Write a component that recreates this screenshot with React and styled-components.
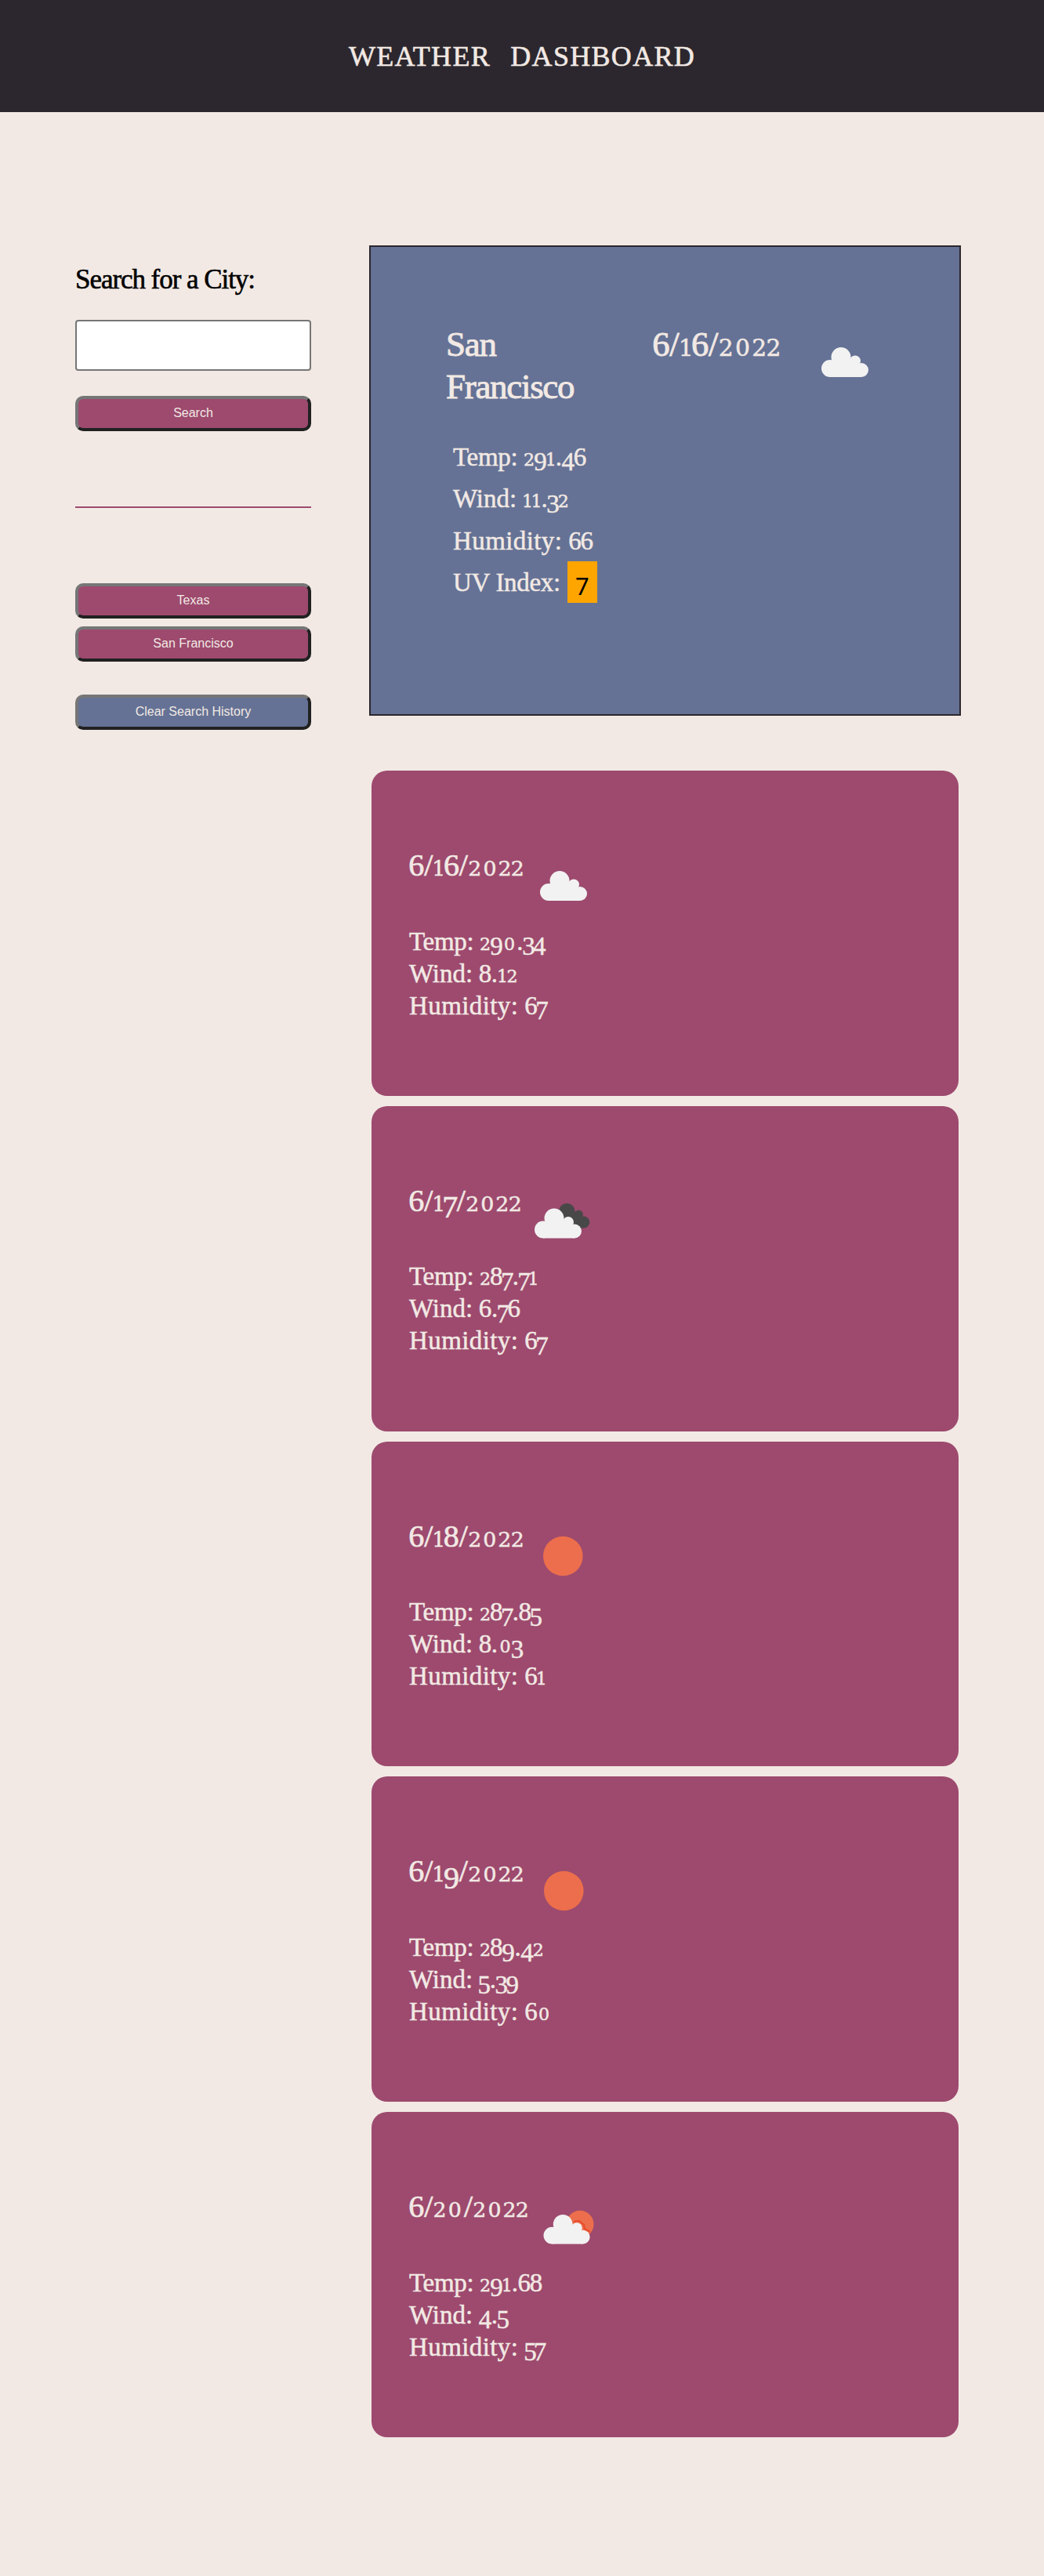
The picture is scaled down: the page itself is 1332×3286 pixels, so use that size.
import React from "react";
import styled, { createGlobalStyle, css } from "styled-components";

const ink = "#2c272e";
const cream = "#f2e9e4";
const berry = "#9d4a6e";
const slate = "#657295";
const serif = '"Liberation Serif", "Times New Roman", serif';

const GlobalStyle = createGlobalStyle`
  * { box-sizing: border-box; }
  body { margin: 0; background: ${cream}; color: ${cream}; font-family: ${serif}; }
`;

const Page = styled.div`
  min-height: 3286px;
  background: ${cream};
`;

const Header = styled.header`
  height: 143px;
  display: flex;
  align-items: center;
  justify-content: center;
  background: ${ink};
`;

const Title = styled.h1`
  margin: 0;
  padding-top: 1px;
  font-size: 36px;
  line-height: 44px;
  font-weight: 400;
  letter-spacing: 1.3px;
  word-spacing: 15px;
  text-transform: uppercase;
  -webkit-text-stroke: 0.6px ${cream};
`;

const Layout = styled.main`
  display: grid;
  grid-template-columns: 301px 755px;
  column-gap: 74px;
  align-items: start;
  padding: 170px 0 0 96px;
`;

const Sidebar = styled.aside`
  display: flex;
  flex-direction: column;
  padding-top: 24px;
`;

const SearchLabel = styled.label`
  font-size: 35px;
  line-height: 40px;
  letter-spacing: -1.05px;
  color: #000;
  white-space: nowrap;
  -webkit-text-stroke: 0.6px #000;
`;

const SearchInput = styled.input`
  height: 65px;
  margin: 31px 0 32px;
  padding: 0 12px;
  border: 2px solid #767676;
  border-radius: 4px;
  background: #fff;
  font-size: 24px;
`;

const Button = styled.button`
  height: 45px;
  border: 4px solid;
  border-color: #767676 #212121 #212121 #767676;
  border-radius: 10px;
  padding: 0 0 1px;
  background: ${(p) => (p.$muted ? slate : berry)};
  color: ${cream};
  font: 16px "Liberation Sans", Arial, sans-serif;
`;

const Divider = styled.hr`
  width: 100%;
  height: 2px;
  margin: 96px 0;
  border: 0;
  background: ${berry};
`;

const History = styled.div`
  display: grid;
  gap: 10px;
  margin-bottom: 42px;
`;

const Current = styled.section`
  height: 600px;
  padding: 96px;
  border: 2px solid ${ink};
  background: ${slate};
`;

const CurrentTop = styled.div`
  display: grid;
  grid-template-columns: 264px 195px 100px;
  height: 108px;
  font-size: 45px;
  line-height: 54px;
`;

const City = styled.h2`
  width: 170px;
  margin: 0;
  padding-top: 1px;
  font-size: 45px;
  font-weight: 400;
  letter-spacing: -1.3px;
  -webkit-text-stroke: 0.9px ${cream};
`;

const CurrentDate = styled.div`
  padding-top: 1px;
  font-size: 44.5px;
  white-space: nowrap;
  -webkit-text-stroke: 0.9px ${cream};
`;

const Stats = styled.div`
  padding-top: 1.5px;
  font-size: 33px;
  line-height: ${(p) => p.$line}px;
  -webkit-text-stroke: 0.5px ${cream};
  ${(p) => p.$inset && css`margin: 36px 0 0 9px;`}
`;

const Stat = styled.div`
  display: flex;
  height: ${(p) => p.$line}px;
  white-space: pre;
`;

const StatLabel = styled.span`
  letter-spacing: ${(p) => p.$track}px;
`;

const Uv = styled.span`
  width: 38px;
  height: 53px;
  margin: -1px 0 0 1px;
  padding-top: 5px;
  background: orange;
  color: #000;
  text-align: center;
  font-family: "Noto Sans", sans-serif;
  font-size: 31px;
  -webkit-text-stroke: 0;
`;

const Forecast = styled.section`
  display: grid;
  gap: 13px;
  padding: 70px 3px 0;
`;

const Card = styled.article`
  height: 414.75px;
  padding: 96px 48px;
  border-radius: 20px;
  background: ${berry};
`;

const CardTop = styled.div`
  display: flex;
  height: 100px;
  font-size: 40px;
  line-height: 50px;
  -webkit-text-stroke: 0.7px ${cream};
`;

const Icon = styled.svg`
  display: block;
  flex: none;
  width: 100px;
  height: 100px;
  -webkit-text-stroke: 0;
`;

/* Old-style figures: 0-2 sit at x-height, 3, 4, 5, 7 and 9 hang below the line. */
const bearing = {
  0: 0.09, 1: -0.062, 2: -0.014,
  3: -0.055, 4: -0.022, 5: -0.055, 6: -0.02, 7: -0.06, 8: -0.022, 9: -0.02,
  "/": 0.018, ".": 0.01,
};

const Figure = styled.span`
  margin: 0 ${(p) => p.$side}em;
  line-height: 0;
  ${(p) => p.$kind === "small" && css`
    font-family: "DejaVu Serif", serif;
    font-size: 0.67em;
    -webkit-text-stroke-width: 0.5px;
  `}
  ${(p) => p.$kind === "hanging" && css`vertical-align: -0.21em;`}
`;

const kindOf = (c) =>
  "012".includes(c) ? "small" : "34579".includes(c) ? "hanging" : "tall";

const Figures = ({ children }) => (
  <span>
    {[...children].map((c, i) => (
      <Figure key={i} $kind={kindOf(c)} $side={bearing[c]}>{c}</Figure>
    ))}
  </span>
);

const Cloud = ({ fill, ...rest }) => (
  <g fill={fill} {...rest}>
    <circle cx="11" cy="27" r="11" />
    <circle cx="25" cy="12.5" r="12.5" />
    <circle cx="43" cy="17.5" r="7" />
    <circle cx="51" cy="29" r="9" />
    <path d="M11 38V20L14 16L36 13L48 21L51 24V38Z" />
  </g>
);

const WeatherIcon = ({ kind }) => (
  <Icon viewBox="0 0 100 100" aria-hidden="true">
    {kind === "sun" && <circle cx="50.3" cy="50" r="25.3" fill="#ec6e4c" />}
    {kind === "cloud" && <Cloud fill="#f2f2f2" transform="translate(20 32)" />}
    {kind === "broken" && (
      <>
        <Cloud fill="#484848" transform="translate(37.5 28) scale(.83)" />
        <Cloud fill="#f2f2f2" transform="translate(17 34.5)" />
      </>
    )}
    {kind === "few" && (
      <>
        <circle cx="65" cy="47.3" r="17.5" fill="#ec6e4c" />
        <path d="M57 44L64 43L70 48L71 53L78 57" fill="none" stroke="#e84a2a" strokeWidth="2" />
        <Cloud fill="#f2f2f2" transform="translate(18.5 35) scale(.985)" />
      </>
    )}
  </Icon>
);

const labelTrack = { Temp: -0.3, Wind: 0, Humidity: 0.4 };

const Reading = ({ label, value, line }) => (
  <Stat $line={line}>
    <StatLabel $track={labelTrack[label]}>{label}: </StatLabel>
    <Figures>{value}</Figures>
  </Stat>
);

const days = [
  { date: "6/16/2022", icon: "cloud", temp: "290.34", wind: "8.12", humidity: "67" },
  { date: "6/17/2022", icon: "broken", temp: "287.71", wind: "6.76", humidity: "67" },
  { date: "6/18/2022", icon: "sun", temp: "287.85", wind: "8.03", humidity: "61" },
  { date: "6/19/2022", icon: "sun", temp: "289.42", wind: "5.39", humidity: "60" },
  { date: "6/20/2022", icon: "few", temp: "291.68", wind: "4.5", humidity: "57" },
];

export default function App() {
  return (
    <Page>
      <GlobalStyle />
      <Header>
        <Title>Weather Dashboard</Title>
      </Header>
      <Layout>
        <Sidebar>
          <SearchLabel htmlFor="city">Search for a City:</SearchLabel>
          <SearchInput id="city" />
          <Button>Search</Button>
          <Divider />
          <History>
            <Button>Texas</Button>
            <Button>San Francisco</Button>
          </History>
          <Button $muted>Clear Search History</Button>
        </Sidebar>
        <div>
          <Current>
            <CurrentTop>
              <City>San Francisco</City>
              <CurrentDate><Figures>6/16/2022</Figures></CurrentDate>
              <WeatherIcon kind="cloud" />
            </CurrentTop>
            <Stats $line={53.5} $inset>
              <Reading label="Temp" value="291.46" line={53.5} />
              <Reading label="Wind" value="11.32" line={53.5} />
              <Reading label="Humidity" value="66" line={53.5} />
              <Stat $line={53.5}>
                <StatLabel $track={-0.3}>UV Index: </StatLabel>
                <Uv>7</Uv>
              </Stat>
            </Stats>
          </Current>
          <Forecast>
            {days.map((d) => (
              <Card key={d.date}>
                <CardTop>
                  <Figures>{d.date}</Figures>
                  <WeatherIcon kind={d.icon} />
                </CardTop>
                <Stats $line={41}>
                  <Reading label="Temp" value={d.temp} line={41} />
                  <Reading label="Wind" value={d.wind} line={41} />
                  <Reading label="Humidity" value={d.humidity} line={41} />
                </Stats>
              </Card>
            ))}
          </Forecast>
        </div>
      </Layout>
    </Page>
  );
}
